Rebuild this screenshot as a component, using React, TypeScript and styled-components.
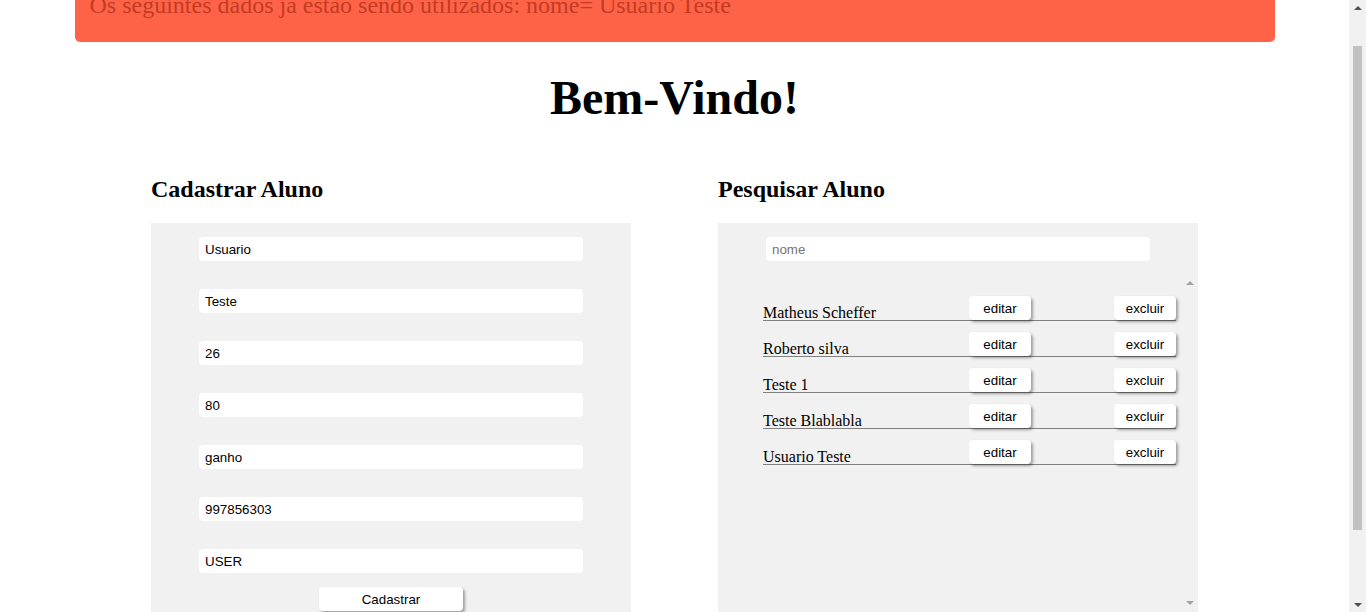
import React from "react";
import styled, { createGlobalStyle } from "styled-components";

const Global = createGlobalStyle`
  html, body { margin: 0; padding: 0; overflow: hidden; background: #ffffff; }
  body { font-family: "Liberation Serif", "Times New Roman", serif; color: #000; }
  * { box-sizing: border-box; }
`;

const Page = styled.div`
  width: calc(100vw - 17px);
  height: 612px;
  overflow: hidden;
  display: flex;
  flex-direction: column;
  align-items: center;
`;

const Alert = styled.div`
  width: 1200px;
  margin-top: -24px;
  padding: 14px 15px 22px;
  background: #ff6347;
  border-radius: 0 0 5px 5px;
  color: #c23b22;
  font-size: 24px;
  line-height: 30px;
  flex-shrink: 0;
`;

const Title = styled.h1`
  margin: 28px 0 0;
  font-size: 48px;
  line-height: 56px;
  font-weight: bold;
  text-align: center;
`;

const Columns = styled.div`
  width: 1047px;
  margin-top: 49px;
  display: flex;
  justify-content: space-between;
  align-items: flex-start;
`;

const Column = styled.section`
  width: 480px;
  display: flex;
  flex-direction: column;
`;

const SectionTitle = styled.h2`
  margin: 0 0 20px;
  font-size: 24px;
  line-height: 28px;
  font-weight: bold;
`;

const Panel = styled.div`
  background: #f1f1f1;
  padding-top: 14px;
  padding-bottom: 20px;
  display: flex;
  flex-direction: column;
  align-items: center;
`;

const Form = styled(Panel)`
  gap: 28px;
`;

const Field = styled.input`
  width: 384px;
  height: 24px;
  border: none;
  border-radius: 4px;
  background: #ffffff;
  padding: 0 6px;
  font-family: "Liberation Sans", Arial, sans-serif;
  font-size: 13.33px;
  color: #000;
  outline: none;
  &::placeholder { color: #757575; }
`;

const Button = styled.button<{ $w: number }>`
  width: ${(p) => p.$w}px;
  height: 24px;
  border: none;
  border-radius: 4px;
  background: #ffffff;
  box-shadow: 2px 2px 3px rgba(0, 0, 0, 0.35);
  font-family: "Liberation Sans", Arial, sans-serif;
  font-size: 13.33px;
  color: #000;
  padding: 0;
  cursor: pointer;
`;

const SubmitButton = styled(Button)`
  margin-top: -14px;
`;

const ListBox = styled.div`
  align-self: stretch;
  margin-top: 16px;
  height: 340px;
  display: flex;
`;

const ListContent = styled.div`
  flex: 1;
  padding: 8px 5px 0 45px;
  display: flex;
  flex-direction: column;
`;

const Row = styled.div`
  margin-top: 11px;
  display: grid;
  grid-template-columns: 206px 62px 1fr 62px;
  align-items: end;
  border-bottom: 1px solid #808080;
`;

const Name = styled.span`
  font-size: 16px;
  line-height: 14px;
`;

const ScrollTrack = styled.div`
  width: 17px;
  height: 332px;
  display: flex;
  flex-direction: column;
  justify-content: space-between;
  align-items: center;
  padding: 4px 0;
`;

const Arrow = styled.div<{ $down?: boolean; $color: string }>`
  width: 0;
  height: 0;
  border-left: 4px solid transparent;
  border-right: 4px solid transparent;
  ${(p) =>
    p.$down
      ? `border-top: 4px solid ${p.$color};`
      : `border-bottom: 4px solid ${p.$color};`}
`;

const PageScrollbar = styled.div`
  position: fixed;
  top: 0;
  right: 0;
  width: 17px;
  height: 100vh;
  background: #f1f1f1;
  display: flex;
  flex-direction: column;
  align-items: center;
  justify-content: space-between;
  padding: 6px 0 5px;
`;

const Thumb = styled.div`
  width: 9px;
  height: 484px;
  background: #c1c1c1;
  margin-top: 35px;
  margin-bottom: 73px;
`;

const students = [
  "Matheus Scheffer",
  "Roberto silva",
  "Teste 1",
  "Teste Blablabla",
  "Usuario Teste",
];

const formValues = ["Usuario", "Teste", "26", "80", "ganho", "997856303", "USER"];

export default function App() {
  return (
    <>
      <Global />
      <Page>
        <Alert>Os seguintes dados já estão sendo utilizados: nome= Usuario Teste</Alert>
        <Title>Bem-Vindo!</Title>
        <Columns>
          <Column>
            <SectionTitle>Cadastrar Aluno</SectionTitle>
            <Form>
              {formValues.map((v, i) => (
                <Field key={i} defaultValue={v} />
              ))}
              <SubmitButton $w={144}>Cadastrar</SubmitButton>
            </Form>
          </Column>
          <Column>
            <SectionTitle>Pesquisar Aluno</SectionTitle>
            <Panel>
              <Field placeholder="nome" />
              <ListBox>
                <ListContent>
                  {students.map((s) => (
                    <Row key={s}>
                      <Name>{s}</Name>
                      <Button $w={62}>editar</Button>
                      <span />
                      <Button $w={62}>excluir</Button>
                    </Row>
                  ))}
                </ListContent>
                <ScrollTrack>
                  <Arrow $color="#a3a3a3" />
                  <Arrow $down $color="#a3a3a3" />
                </ScrollTrack>
              </ListBox>
            </Panel>
          </Column>
        </Columns>
      </Page>
      <PageScrollbar>
        <Arrow $color="#505050" />
        <Thumb />
        <Arrow $down $color="#505050" />
      </PageScrollbar>
    </>
  );
}
